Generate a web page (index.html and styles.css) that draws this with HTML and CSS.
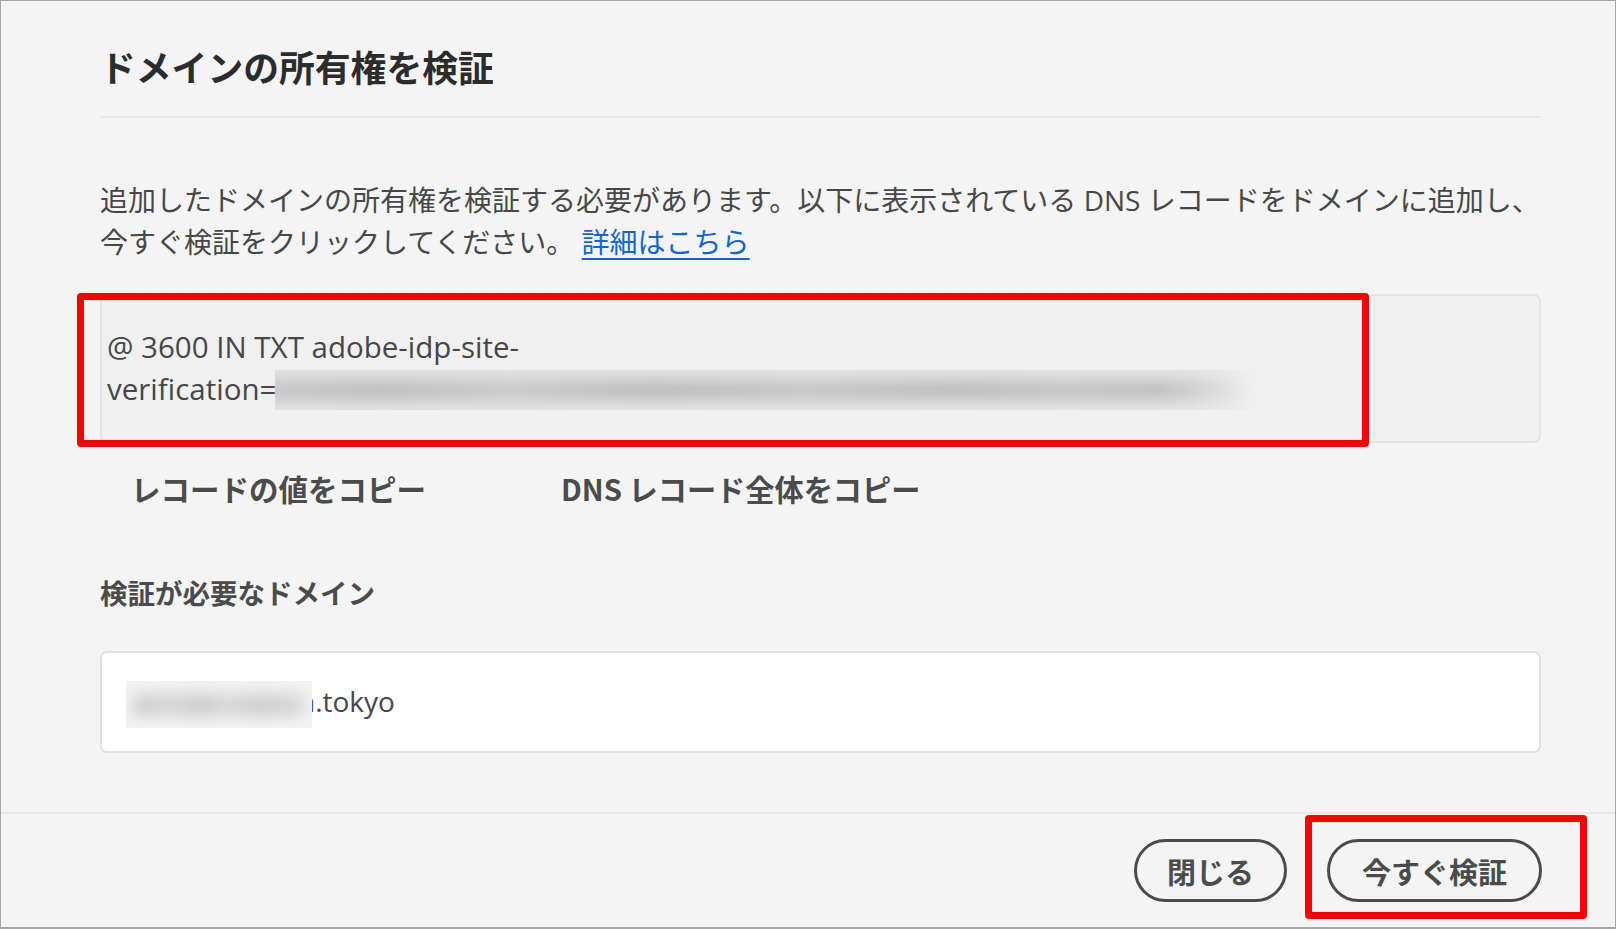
FILE: index.html
```html
<!DOCTYPE html>
<html lang="ja">
<head>
<meta charset="utf-8">
<title>ドメインの所有権を検証</title>
<link rel="stylesheet" href="styles.css">
</head>
<body>
<div class="window">
  <div class="content">
    <header class="dlg-header">
      <h1 class="dlg-title">ドメインの所有権を検証</h1>
    </header>
    <p class="intro">追加したドメインの所有権を検証する必要があります。以下に表示されている DNS レコードをドメインに追加し、<br>今すぐ検証をクリックしてください。 <a class="link" href="#">詳細はこちら</a></p>
    <div class="record">@ 3600 IN TXT adobe-idp-site-<br>verification=1<span class="redact redact-record"><span class="redact-ink"></span></span></div>
    <div class="copy-row">
      <button class="quiet-btn" type="button">レコードの値をコピー</button>
      <button class="quiet-btn" type="button">DNS レコード全体をコピー</button>
    </div>
    <h2 class="field-label">検証が必要なドメイン</h2>
    <div class="domain-field"><span class="value"><span class="redact redact-domain"><span class="redact-ink"></span></span>n.tokyo</span></div>
  </div>
  <footer class="dlg-footer">
    <button class="pill-btn" type="button">閉じる</button>
    <button class="pill-btn" type="button">今すぐ検証</button>
  </footer>
  <div class="mark mark-record"></div>
  <div class="mark mark-verify"></div>
</div>
</body>
</html>
```
FILE: styles.css
```css
html, body {
  margin: 0;
  padding: 0;
  background: #f4f4f4;
}

body {
  font-family: "Open Sans", "Noto Sans CJK JP", sans-serif;
  color: #4b4b4b;
}

.window {
  position: relative;
  width: 1616px;
  height: 929px;
  box-sizing: border-box;
  border: 1px solid #a6a6a6;
  border-bottom-width: 2px;
  background: #f4f4f4;
  display: flex;
  flex-direction: column;
  overflow: hidden;
}

.content {
  flex: 1;
  padding: 0 74px 0 99px;
  display: flex;
  flex-direction: column;
}

.dlg-header {
  padding-top: 40px;
  padding-bottom: 25px;
  border-bottom: 2px solid #e8e8e8;
}

.dlg-title {
  margin: 0;
  font-family: "Noto Sans CJK JP", sans-serif;
  font-size: 35.8px;
  line-height: 50px;
  font-weight: 700;
  color: #2c2c2c;
}

.intro {
  margin: 61px 0 0;
  font-size: 28px;
  line-height: 42px;
  white-space: nowrap;
  color: #474747;
}

.link {
  color: #1165d4;
  text-decoration: underline;
  text-decoration-thickness: 2px;
  text-underline-offset: 5px;
}

.record {
  margin-top: 31px;
  height: 149px;
  box-sizing: border-box;
  padding: 30px 5px 0;
  border: 2px solid #e3e3e3;
  border-radius: 7px;
  background: #f0f0f0;
  font-size: 29.5px;
  line-height: 42px;
  color: #474747;
  white-space: nowrap;
}

.redact {
  display: inline-block;
  overflow: hidden;
}

.redact-ink {
  display: block;
}

.redact-record {
  position: relative;
  width: 990px;
  height: 40px;
  margin-left: -18px;
  margin-top: 2px;
  vertical-align: top;
  background: linear-gradient(to right, #e2e2e2 0%, #e4e4e4 92%, #f0f0f0 100%);
}

.redact-record .redact-ink {
  height: 22px;
  margin: 9px 0 0 -10px;
  width: 980px;
  background: linear-gradient(to right, #c9c9c9 0%, #c2c2c2 12%, #cbcbcb 25%, #c0c0c0 40%, #c8c8c8 55%, #c1c1c1 70%, #c7c7c7 82%, #c3c3c3 91%, rgba(230,230,230,0) 100%);
  filter: blur(6px);
}

.copy-row {
  margin-top: 24px;
  padding-left: 31px;
  display: flex;
  gap: 135px;
}

.quiet-btn {
  margin: 0;
  padding: 0;
  border: 0;
  background: transparent;
  font-family: "Noto Sans CJK JP", sans-serif;
  font-size: 29.5px;
  line-height: 42px;
  font-weight: 700;
  color: #4b4b4b;
  cursor: pointer;
}

.quiet-btn + .quiet-btn {
  font-size: 29.2px;
}

.field-label {
  margin: 63px 0 0;
  font-family: "Noto Sans CJK JP", sans-serif;
  font-size: 27.5px;
  line-height: 40px;
  font-weight: 700;
  color: #4b4b4b;
}

.domain-field {
  margin-top: 39px;
  height: 102px;
  box-sizing: border-box;
  padding: 4px 24px 0;
  border: 2px solid #e1e1e1;
  border-radius: 7px;
  background: #ffffff;
  display: flex;
  align-items: center;
  font-size: 28px;
  color: #474747;
}

.value {
  line-height: 42px;
  white-space: nowrap;
}

.redact-domain {
  position: relative;
  z-index: 1;
  width: 186px;
  height: 47px;
  margin-right: -14px;
  vertical-align: middle;
  background: #f2f2f2;
}

.redact-domain .redact-ink {
  height: 22px;
  margin: 13px 0 0 8px;
  width: 170px;
  background: linear-gradient(to right, #cdcdcd 0%, #d6d6d6 20%, #cccccc 40%, #d8d8d8 55%, #cdcdcd 75%, #d9d9d9 100%);
  filter: blur(7px);
}

.dlg-footer {
  border-top: 2px solid #e8e8e8;
  padding: 25px 73px 25px 0;
  display: flex;
  justify-content: flex-end;
  gap: 40px;
}

.pill-btn {
  margin: 0;
  height: 63px;
  box-sizing: border-box;
  padding: 0 30px;
  border: 3px solid #4b4b4b;
  border-radius: 32px;
  background: transparent;
  font-family: "Noto Sans CJK JP", sans-serif;
  font-size: 29px;
  font-weight: 700;
  color: #4b4b4b;
  cursor: pointer;
}

.pill-btn + .pill-btn {
  padding: 0 32px;
}

.mark {
  position: absolute;
  border: 7px solid #ff0000;
  border-radius: 4px;
  box-sizing: border-box;
}

.mark-record {
  left: 76px;
  top: 292px;
  width: 1292px;
  height: 154px;
}

.mark-verify {
  left: 1304px;
  top: 814px;
  width: 282px;
  height: 104px;
}
```
